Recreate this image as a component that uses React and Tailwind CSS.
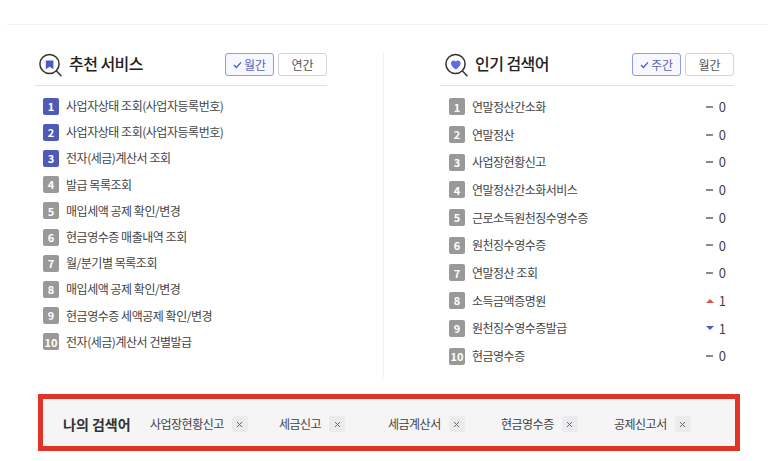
import React from 'react';

const services = [
    '사업자상태 조회(사업자등록번호)',
    '사업자상태 조회(사업자등록번호)',
    '전자(세금)계산서 조회',
    '발급 목록조회',
    '매입세액 공제 확인/변경',
    '현금영수증 매출내역 조회',
    '월/분기별 목록조회',
    '매입세액 공제 확인/변경',
    '현금영수증 세액공제 확인/변경',
    '전자(세금)계산서 건별발급',
];

const keywords = [
    { text: '연말정산간소화', dir: 'same', count: 0 },
    { text: '연말정산', dir: 'same', count: 0 },
    { text: '사업장현황신고', dir: 'same', count: 0 },
    { text: '연말정산간소화서비스', dir: 'same', count: 0 },
    { text: '근로소득원천징수영수증', dir: 'same', count: 0 },
    { text: '원천징수영수증', dir: 'same', count: 0 },
    { text: '연말정산 조회', dir: 'same', count: 0 },
    { text: '소득금액증명원', dir: 'up', count: 1 },
    { text: '원천징수영수증발급', dir: 'down', count: 1 },
    { text: '현금영수증', dir: 'same', count: 0 },
];

const myKeywords = [
    { text: '사업장현황신고', width: 'w-[129px]' },
    { text: '세금신고', width: 'w-[109px]' },
    { text: '세금계산서', width: 'w-[113px]' },
    { text: '현금영수증', width: 'w-[113px]' },
    { text: '공제신고서', width: 'w-[114px]' },
];

const SearchIcon = ({ type }) => (
    <svg width="23" height="24" viewBox="0 0 23 24" fill="none">
        <circle cx="10.5" cy="11" r="9.6" stroke="#333" strokeWidth="1.5" />
        <path d="M17.5 18l4.5 4.8" stroke="#333" strokeWidth="1.5" strokeLinecap="round" />
        {type === 'bookmark' ? (
            <path d="M6.8 7.6h7.6v8.6l-3.8-2.4-3.8 2.4z" fill="#4f5bc4" />
        ) : (
            <path d="M10.8 16.4c-2.9-2.1-4.8-3.8-4.8-6 0-1.6 1.2-2.8 2.6-2.8 1 0 1.7.5 2.2 1.2.5-.7 1.2-1.2 2.2-1.2 1.4 0 2.6 1.2 2.6 2.8 0 2.2-1.9 3.9-4.8 6z" fill="#5f6be0" />
        )}
    </svg>
);

const Toggle = ({ active, label }) => (
    <button
        className={`h-[23px] w-[49px] flex items-center justify-center rounded-[3px] border text-[12px] ${
            active ? 'border-[#8f9bf0] bg-[#f6f7ff] text-[#5a64b8]' : 'border-[#d4d4d8] bg-white text-[#555]'
        }`}
    >
        {active && (
            <svg width="9" height="8" viewBox="0 0 9 8" fill="none" className="mr-[2px]">
                <path d="M1 4l2.4 2.4L8 1.4" stroke="#4f5bc4" strokeWidth="1.4" />
            </svg>
        )}
        {label}
    </button>
);

const Header = ({ icon, title, tabs, indent }) => (
    <div className={`h-[33px] flex items-start justify-between border-b border-[#e0e0e0] ${indent}`}>
        <div className="flex items-center gap-[7px] h-[23px]">
            <SearchIcon type={icon} />
            <h2 className="text-[16px] leading-[20px] pb-[3px] font-medium text-[#222] tracking-[-0.55px]">{title}</h2>
        </div>
        <div className="flex gap-[4px]">
            <Toggle active label={tabs[0]} />
            <Toggle label={tabs[1]} />
        </div>
    </div>
);

const RankBadge = ({ rank, highlight }) => (
    <span
        className={`w-[16px] h-[17px] shrink-0 flex items-center justify-center rounded-[2px] text-[11px] font-bold tracking-normal text-white ${
            highlight ? 'bg-[#4f5bb8]' : 'bg-[#999999]'
        }`}
    >
        {rank}
    </span>
);

const Trend = ({ dir, count }) => (
    <div className="flex items-center justify-between text-[13px] text-[#444] tracking-normal w-[20px]">
        {dir === 'same' && <span className="w-[7px] h-[2px] bg-[#8a8a8a]" />}
        {dir === 'up' && <span className="w-0 h-0 border-x-[4px] border-x-transparent border-b-[4px] border-b-[#d9534f]" />}
        {dir === 'down' && <span className="w-0 h-0 border-x-[4px] border-x-transparent border-t-[4px] border-t-[#4f5bc4]" />}
        <span>{count}</span>
    </div>
);

export default function App() {
    return (
        <div className="w-[776px] h-[461px] bg-white pt-[24px] font-['Noto_Sans_CJK_KR',sans-serif] overflow-hidden">
            <div className="mx-[7px] w-[761px] border-t border-[#f2f2f2] pt-[28px] flex">
                {/* 추천 서비스 */}
                <section className="w-[377px] h-[325px] border-r border-dotted border-[#e4e4e4] pl-[28px]">
                    <div className="w-[292px]">
                        <Header icon="bookmark" title="추천 서비스" tabs={['월간', '연간']} indent="pl-[4px]" />
                        <ul className="mt-[7px] pl-[8px]">
                            {services.map((name, i) => (
                                <li key={i} className="h-[26.2px] flex items-center gap-[7px] text-[12px] text-[#444] tracking-[-0.47px]">
                                    <RankBadge rank={i + 1} highlight={i < 3} />
                                    <span>{name}</span>
                                </li>
                            ))}
                        </ul>
                    </div>
                </section>

                {/* 인기 검색어 */}
                <section className="pl-[56px]">
                    <div className="w-[294px]">
                        <Header icon="heart" title="인기 검색어" tabs={['주간', '월간']} indent="pl-[5px]" />
                        <ul className="mt-[7px] pl-[9px] pr-[8px]">
                            {keywords.map((item, i) => (
                                <li key={i} className="h-[27.7px] flex items-center justify-between text-[12px] text-[#444] tracking-[-0.5px]">
                                    <div className="flex items-center gap-[7px]">
                                        <RankBadge rank={i + 1} />
                                        <span>{item.text}</span>
                                    </div>
                                    <Trend dir={item.dir} count={item.count} />
                                </li>
                            ))}
                        </ul>
                    </div>
                </section>
            </div>

            {/* 나의 검색어 */}
            <div className="ml-[38px] mt-[16px] w-[702px] h-[57px] border-[5px] border-[#e03426] bg-[#f5f5f5] flex items-center pl-[20px] pt-[3px]">
                <strong className="w-[87px] text-[14px] font-bold text-[#333]">나의 검색어</strong>
                {myKeywords.map((item) => (
                    <div key={item.text} className={`${item.width} flex items-center gap-[8px] text-[12px] text-[#444] tracking-[-0.5px]`}>
                        <span>{item.text}</span>
                        <button className="w-[16px] h-[16px] rounded-[3px] bg-[#ebebed] flex items-center justify-center">
                            <svg width="7" height="7" viewBox="0 0 7 7" fill="none">
                                <path d="M1 1l5 5M6 1l-5 5" stroke="#666" strokeWidth="1" />
                            </svg>
                        </button>
                    </div>
                ))}
            </div>
        </div>
    );
}
